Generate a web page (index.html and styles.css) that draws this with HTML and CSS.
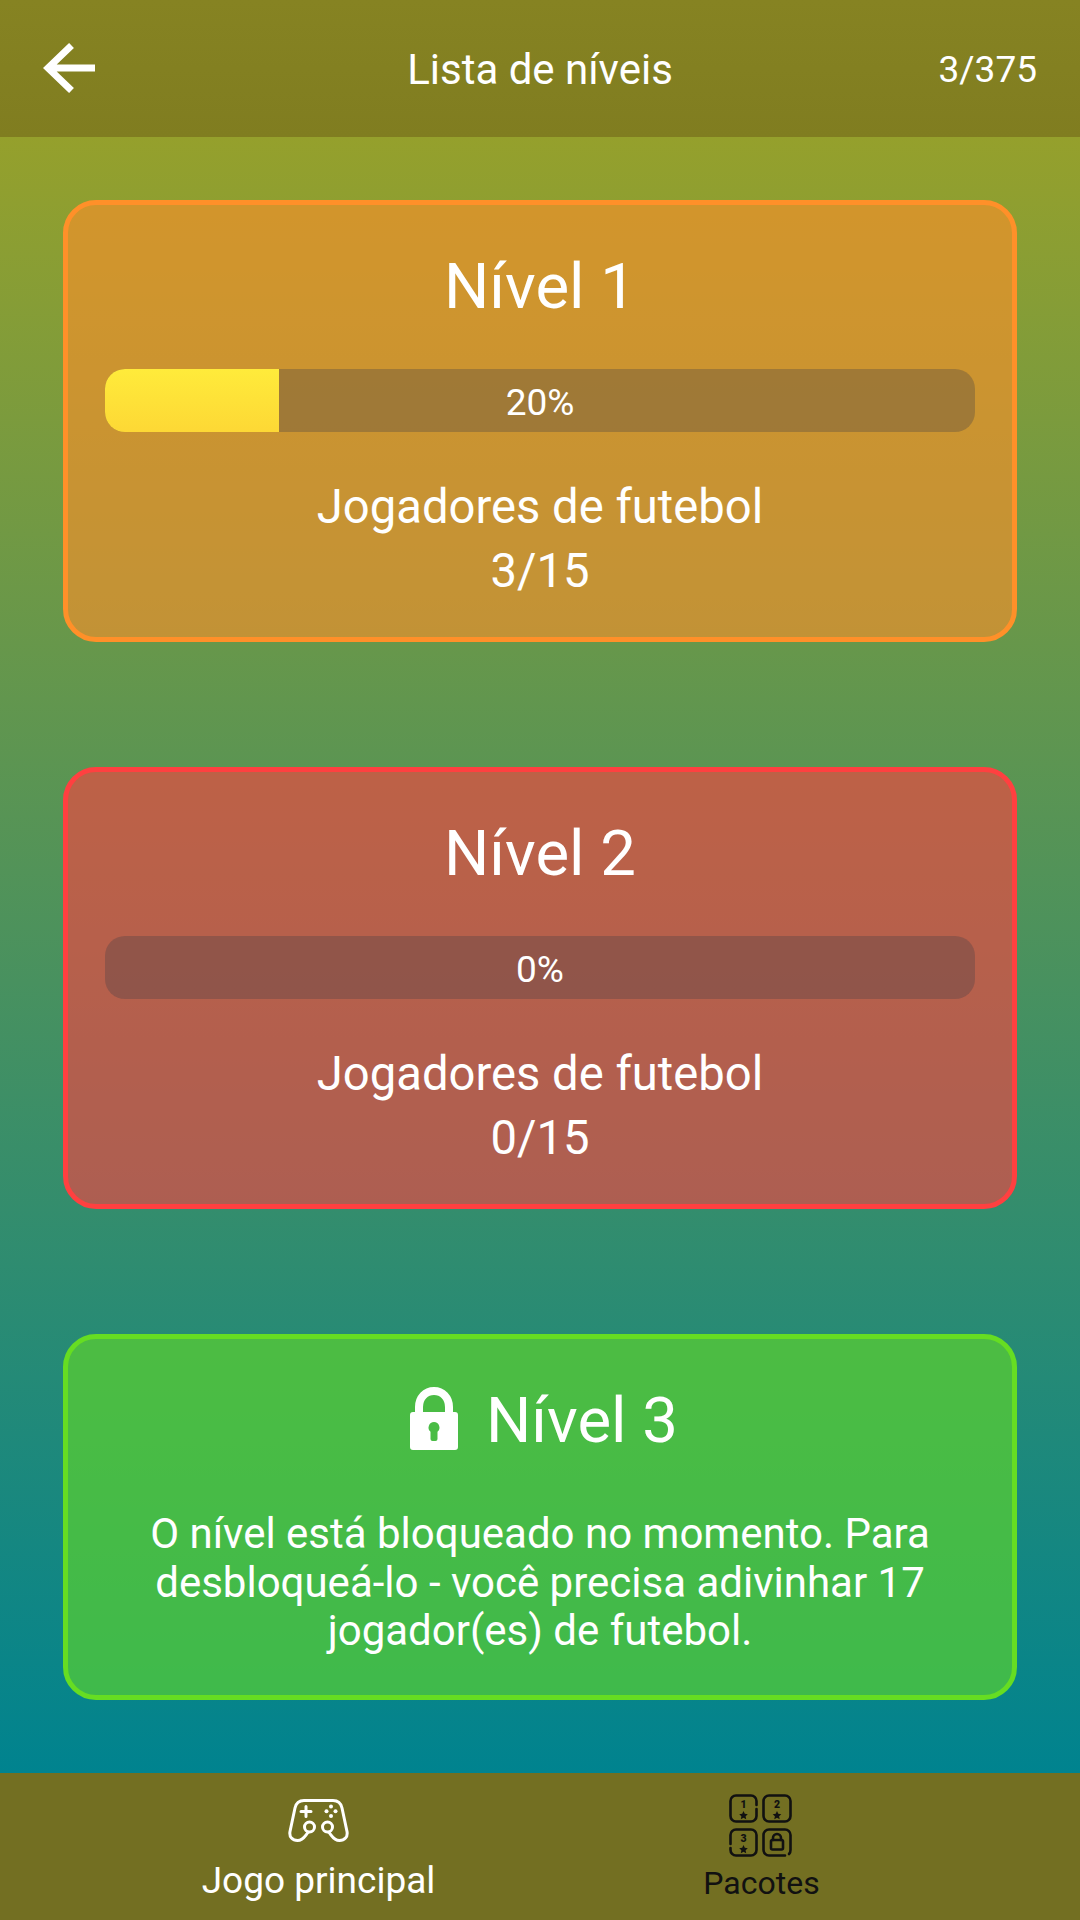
FILE: index.html
```html
<!DOCTYPE html>
<html lang="pt">
<head>
<meta charset="utf-8">
<title>Lista de níveis</title>
<link rel="stylesheet" href="styles.css">
</head>
<body>
<div class="app">
  <header class="topbar">
    <svg class="back" viewBox="0 0 52 50" aria-hidden="true">
      <path d="M28.5 2.5 5 25 28.5 47.5M5 25H52" fill="none" stroke="#fff" stroke-width="7"/>
    </svg>
    <h1 class="topbar-title">Lista de níveis</h1>
    <div class="topbar-count">3/375</div>
  </header>
  <main class="levels">
    <section class="card card-orange">
      <h2 class="card-title">Nível 1</h2>
      <div class="bar"><div class="bar-fill" style="width:20%"></div><span class="bar-label">20%</span></div>
      <p class="card-text">Jogadores de futebol<br>3/15</p>
    </section>
    <section class="card card-red">
      <h2 class="card-title">Nível 2</h2>
      <div class="bar"><div class="bar-fill" style="width:0%"></div><span class="bar-label">0%</span></div>
      <p class="card-text">Jogadores de futebol<br>0/15</p>
    </section>
    <section class="card card-green">
      <h2 class="card-title card-title-locked">
        <svg class="lock" viewBox="0 0 48 63" aria-hidden="true">
          <path d="M9 28V20C9 10.5 15.5 4 24 4S39 10.5 39 20V28" fill="none" stroke="#fff" stroke-width="8"/>
          <path fill="#fff" fill-rule="evenodd" d="M3 25H45A3 3 0 0 1 48 28V60A3 3 0 0 1 45 63H3A3 3 0 0 1 0 60V28A3 3 0 0 1 3 25ZM24 35A5.5 5.5 0 0 0 20.5 44.7V52A2 2 0 0 0 22.500 54H25.500A2 2 0 0 0 27.500 52V44.700A5.500 5.500 0 0 0 24 35Z"/>
        </svg>
        <span>Nível 3</span>
      </h2>
      <p class="card-note">O nível está bloqueado no momento. Para desbloqueá-lo - você precisa adivinhar 17 jogador(es) de futebol.</p>
    </section>
  </main>
  <nav class="tabs">
    <div class="tab tab-active">
      <svg class="tab-icon-game" viewBox="0 0 61 43" aria-hidden="true">
        <g fill="none" stroke="#fff" stroke-width="3" stroke-linecap="round">
          <path d="M41 33.500C43.500 36 45.500 41.500 51.500 41.500C56.500 41.500 60 38 59 32.500L54 9C53 4.500 50 1.500 45 1.500H16C11 1.500 8 4.500 7 9L2 32.500C1 38 4.500 41.500 9.500 41.500C15.500 41.500 17.500 36 20 33.500"/>
          <circle cx="21.500" cy="28" r="5"/>
          <circle cx="39.500" cy="28" r="5"/>
          <path d="M18 7.500V17.500M13 12.500H23"/>
        </g>
        <g fill="#fff">
          <circle cx="43" cy="7.500" r="2"/><circle cx="43" cy="17" r="2"/>
          <circle cx="38.500" cy="12.300" r="2"/><circle cx="47.500" cy="12.300" r="2"/>
        </g>
      </svg>
      <span class="tab-label">Jogo principal</span>
    </div>
    <div class="tab tab-dark">
      <svg class="tab-icon-pack" viewBox="0 0 63 63" aria-hidden="true">
        <g fill="none" stroke="#111" stroke-width="2.600" stroke-linecap="round">
          <path d="M27.500 11V7A5.500 5.500 0 0 0 22 1.500H7A5.500 5.500 0 0 0 1.500 7V22A5.500 5.500 0 0 0 7 27.500H22A5.500 5.500 0 0 0 27.500 22V15"/>
          <rect x="34.500" y="1.500" width="27" height="26" rx="5.500"/>
          <path d="M1.500 50V41A5.500 5.500 0 0 1 7 35.500H22A5.500 5.500 0 0 1 27.500 41V56A5.500 5.500 0 0 1 22 61.500H7A5.500 5.500 0 0 1 1.500 56V54"/>
          <path d="M56 61.500H40A5.500 5.500 0 0 1 34.500 56V41A5.500 5.500 0 0 1 40 35.500H56A5.500 5.500 0 0 1 61.500 41V56A5.500 5.500 0 0 1 60 60"/>
          <path d="M44 46V44A4 4 0 0 1 52 44V46"/>
          <rect x="42" y="46" width="12" height="9.500" rx="1.500"/>
        </g>
        <g class="pack-digits" fill="#111" text-anchor="middle">
          <text x="14.500" y="13.500">1</text><text x="48" y="13.500">2</text><text x="14.500" y="47.500">3</text>
        </g>
        <g fill="#111">
          <path d="M14.500 17l1.300 2.800 3 .4-2.200 2 .6 3-2.700-1.500-2.700 1.500.6-3-2.200-2 3-.4z"/>
          <path d="M48 17l1.300 2.800 3 .4-2.200 2 .6 3-2.700-1.500-2.700 1.500.6-3-2.200-2 3-.4z"/>
          <path d="M14.500 51l1.300 2.800 3 .4-2.200 2 .6 3-2.700-1.500-2.700 1.500.6-3-2.200-2 3-.4z"/>
        </g>
      </svg>
      <span class="tab-label tab-label-small">Pacotes</span>
    </div>
  </nav>
</div>
</body>
</html>
```

FILE: styles.css
```css
* { box-sizing: border-box; }
html, body { margin: 0; padding: 0; }
body { font-family: Roboto, "Noto Sans", sans-serif; color: #fff; }

.app {
  width: 1080px;
  height: 1920px;
  display: flex;
  flex-direction: column;
  overflow: hidden;
}

.topbar {
  height: 137px;
  flex: none;
  display: grid;
  grid-template-columns: 1fr auto 1fr;
  align-items: center;
  padding: 0 43px;
  background: linear-gradient(#868322, #807d20);
}
.back { width: 52px; height: 50px; display: block; margin-top: -1px; }
.topbar-title { margin: 0; padding-top: 3px; font-size: 42px; font-weight: 400; line-height: 50px; }
.topbar-count { justify-self: end; padding-top: 2px; font-size: 37px; line-height: 50px; }

.levels {
  flex: 1;
  display: flex;
  flex-direction: column;
  gap: 125px;
  padding: 63px 63px 0;
  background: linear-gradient(#95a02c, #00838f);
}

.card {
  border: 5px solid;
  border-radius: 33px;
  padding: 47px 37px 34px;
  text-align: center;
}
.card-orange { border-color: #ff9029; background: rgba(255, 144, 41, .6); }
.card-red { border-color: #ff4040; background: rgba(255, 64, 64, .6); }
.card-green { border-color: #66dd22; background: rgba(102, 221, 34, .6); padding-bottom: 39.500px; }

.card-title { margin: 0; font-size: 63.500px; font-weight: 400; line-height: 70px; }
.card-title-locked {
  display: flex;
  justify-content: center;
  align-items: center;
  gap: 28px;
  padding-left: 8px;
}
.lock { width: 48px; height: 63px; display: block; margin-top: -5px; }

.bar {
  position: relative;
  height: 63px;
  margin-top: 47px;
  border-radius: 20px;
  overflow: hidden;
  background: rgba(60, 60, 70, .3);
}
.bar-fill { height: 100%; background: linear-gradient(#ffeb3b, #fdd835); }
.bar-label {
  position: absolute;
  inset: 0;
  font-size: 37px;
  line-height: 68px;
}

.card-text { margin: 43px 0 0; font-size: 47.200px; line-height: 64px; }
.card-note { margin: 54px 0 0; font-size: 42px; line-height: 48.500px; }

.tabs {
  height: 147px;
  flex: none;
  display: grid;
  grid-template-columns: 1fr 1fr;
  padding: 0 97px;
  background: #736f22;
}
.tab { display: flex; flex-direction: column; align-items: center; }
.tab-dark { color: #111; }
.tab-icon-game { width: 61px; height: 43px; margin-top: 26px; display: block; }
.tab-icon-pack { width: 63px; height: 63px; margin-top: 21px; display: block; margin-left: -2px; }
.tab-label { font-size: 37px; line-height: 44px; margin-top: 17px; }
.tab-label-small { font-size: 32px; line-height: 40px; margin-top: 6px; }
.pack-digits { font-family: Roboto, sans-serif; font-size: 10.500px; font-weight: 900; }
```
